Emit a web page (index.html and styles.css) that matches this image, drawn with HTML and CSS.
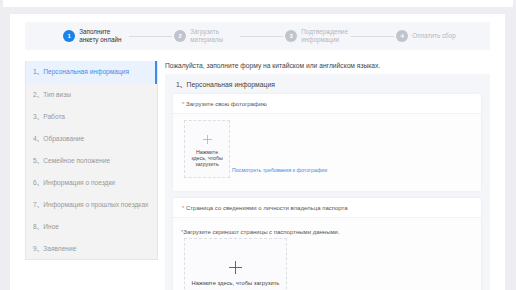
FILE: index.html
```html
<!DOCTYPE html>
<html lang="ru">
<head>
    <meta charset="UTF-8">
    <meta name="viewport" content="width=device-width, initial-scale=1.0">
    <title>Анкета онлайн</title>
    <link rel="stylesheet" href="styles.css">
</head>
<body>
    <div class="topbar"></div>
    <section class="page">
        <div class="steps">
            <div class="step active">
                <span class="num">1</span>
                <span class="step-text">Заполните<br>анкету онлайн</span>
            </div>
            <span class="step-line"></span>
            <div class="step">
                <span class="num">2</span>
                <span class="step-text">Загрузить<br>материалы</span>
            </div>
            <span class="step-line"></span>
            <div class="step">
                <span class="num">3</span>
                <span class="step-text">Подтверждение<br>информации</span>
            </div>
            <span class="step-line"></span>
            <div class="step">
                <span class="num">4</span>
                <span class="step-text single">Оплатить сбор</span>
            </div>
        </div>

        <div class="content">
            <ul class="menu">
                <li class="current">1、Персональная информация</li>
                <li>2、Тип визы</li>
                <li>3、Работа</li>
                <li>4、Образование</li>
                <li>5、Семейное положение</li>
                <li>6、Информация о поездки</li>
                <li>7、Информация о прошлых поездках</li>
                <li>8、Иное</li>
                <li>9、Заявление</li>
            </ul>

            <div class="main">
                <p class="intro">Пожалуйста, заполните форму на китайском или английском языках.</p>
                <div class="panel">
                    <div class="panel-title">1、Персональная информация</div>

                    <div class="card">
                        <div class="card-head"><span class="req">*</span> Загрузите свою фотографию</div>
                        <div class="card-body photo-row">
                            <div class="upload small">
                                <svg width="9" height="9" viewBox="0 0 9 9"><path d="M4.5 0v9M0 4.5h9" stroke="#999" stroke-width="0.6"/></svg>
                                <span>Нажмите<br>здесь, чтобы<br>загрузить</span>
                            </div>
                            <a class="link" href="#">Посмотреть требования к фотографии</a>
                        </div>
                    </div>

                    <div class="card">
                        <div class="card-head"><span class="req">*</span> Страница со сведениями о личности владельца паспорта</div>
                        <div class="card-body">
                            <div class="field-label"><span class="req">*</span>Загрузите скриншот страницы с паспортными данными.</div>
                            <div class="upload large">
                                <svg width="13" height="13" viewBox="0 0 13 13"><path d="M6.5 0v13M0 6.5h13" stroke="#555" stroke-width="0.9"/></svg>
                                <span>Нажмите здесь, чтобы загрузить</span>
                            </div>
                        </div>
                    </div>
                </div>
            </div>
        </div>
    </section>
</body>
</html>
```

FILE: styles.css
```css
*{
    margin: 0;
    padding: 0;
    box-sizing: border-box;
}
body{
    background: #ededf2;
    font-family: "Liberation Sans", Arial, "Noto Sans CJK SC", sans-serif;
    color: #555;
    width: 516px;
    height: 290px;
    overflow: hidden;
}

.topbar{
    height: 7px;
    margin: 0 3px;
    background: #fff;
}

.page{
    background: #fff;
    margin: 7px 11px 0 10px;
    padding: 8px 15px 0 15px;
    height: 276px;
    overflow: hidden;
}

/* steps */
.steps{
    height: 28px;
    background: #f5f6fa;
    display: flex;
    align-items: center;
    justify-content: center;
    padding-left: 4px;
}
.step{
    display: flex;
    align-items: center;
}
.num{
    width: 12px;
    height: 12px;
    border-radius: 50%;
    background: #c0c4cc;
    color: #fff;
    font-size: 6px;
    font-weight: bold;
    display: flex;
    align-items: center;
    justify-content: center;
    margin-right: 4px;
}
.step-text{
    width: 46px;
    font-size: 6.3px;
    line-height: 8px;
    color: #b4b8c0;
    white-space: nowrap;
}
.step-text.single{
    width: auto;
}
.step.active .num{
    background: #1a82e8;
}
.step.active .step-text{
    color: #333;
}
.step-line{
    width: 43px;
    height: 1px;
    background: #d8dbe2;
    margin: 0 2px 0 4px;
}

/* content */
.content{
    display: flex;
    gap: 7px;
    margin-top: 11px;
}
.menu{
    list-style: none;
    width: 133px;
    height: 199px;
    background: #f3f3f3;
    border: 1px solid #e6e6e6;
    flex-shrink: 0;
}
.menu li{
    height: 22px;
    line-height: 22px;
    padding-left: 7px;
    font-size: 6.6px;
    color: #999;
    white-space: nowrap;
}
.menu li.current{
    background: #eaf3fd;
    color: #3a8ee6;
    border-right: 2px solid #3a8ee6;
    height: 23px;
    margin-top: -1px;
    line-height: 22px;
}

.main{
    flex: 1;
}
.intro{
    font-size: 6.7px;
    color: #444;
    line-height: 10px;
}
.panel{
    background: #f5f6fa;
    margin-top: 3px;
    padding: 0 9px 0 8px;
    height: 216px;
    overflow: hidden;
}
.panel-title{
    font-size: 6.8px;
    color: #444;
    height: 20px;
    line-height: 22px;
    padding-left: 3px;
}
.card{
    background: #fff;
    box-shadow: 0 0 3px rgba(0,0,0,0.06);
    border-radius: 2px;
    margin-bottom: 7px;
}
.card-head{
    height: 20px;
    line-height: 20px;
    padding-left: 9px;
    font-size: 6px;
    color: #555;
    border-bottom: 1px solid #f1f2f5;
}
.req{
    color: #f56c6c;
}
.card-body{
    background: #fdfdfe;
    padding: 6px 11px 13px 11px;
}
.photo-row{
    display: flex;
    align-items: flex-end;
}
.upload{
    border: 1px dashed #dcdfe6;
    background: #fbfbfd;
    display: flex;
    flex-direction: column;
    align-items: center;
    justify-content: center;
    text-align: center;
    color: #444;
}
.upload.small{
    width: 46px;
    height: 58px;
    font-size: 5.3px;
    line-height: 6px;
}
.upload.small svg{
    margin: 4px 0 5px;
}
.upload.large{
    width: 103px;
    height: 56px;
    font-size: 5.8px;
}
.upload.large svg{
    margin: 14px 0 6px;
}
.link{
    font-size: 5.3px;
    color: #3a8ee6;
    text-decoration: none;
    margin-left: 2px;
    margin-bottom: 5px;
}
.field-label{
    font-size: 6px;
    color: #555;
    margin: 5px 0 3px -3px;
}
```
